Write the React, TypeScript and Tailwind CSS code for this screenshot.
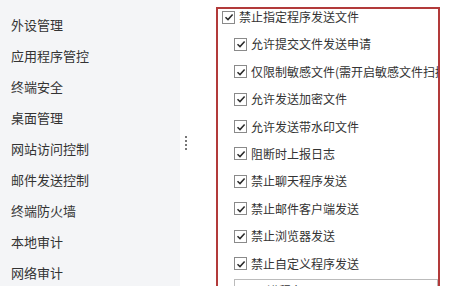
import React from 'react'

const menu = ['外设管理', '应用程序管控', '终端安全', '桌面管理', '网站访问控制', '邮件发送控制', '终端防火墙', '本地审计', '网络审计']

const subs = [
  '允许提交文件发送申请',
  '仅限制敏感文件(需开启敏感文件扫描)',
  '允许发送加密文件',
  '允许发送带水印文件',
  '阻断时上报日志',
  '禁止聊天程序发送',
  '禁止邮件客户端发送',
  '禁止浏览器发送',
  '禁止自定义程序发送',
]

const Check = () => (
  <span className="w-[13px] h-[13px] shrink-0 border border-[#8a8a8a] bg-white flex items-center justify-center">
    <svg width="10" height="10" viewBox="0 0 10 10">
      <path d="M1.5 5.2 L4 7.6 L8.6 2.4" fill="none" stroke="#2b2b2b" strokeWidth="1.5" />
    </svg>
  </span>
)

const Row = ({ label, indent }: { label: string; indent?: boolean }) => (
  <div className={`flex items-center gap-[4px] h-[16px] whitespace-nowrap ${indent ? 'pl-[12px]' : ''}`}>
    <Check />
    <span className="text-[12px] text-[#333]">{label}</span>
  </div>
)

export default function App() {
  return (
    <div
      className="w-[459px] h-[286px] overflow-hidden bg-white flex"
      style={{ fontFamily: '"Noto Sans CJK SC", "Noto Sans", sans-serif' }}
    >
      <aside className="w-[180px] shrink-0 bg-[#f4f5f7] pt-[9px] pl-[11px]">
        {menu.map((m) => (
          <div key={m} className="h-[31px] flex items-center text-[13px] text-[#333]">{m}</div>
        ))}
      </aside>
      <div className="w-[36px] shrink-0 flex items-center pl-[5px]">
        <div className="flex flex-col gap-[2px]">
          <span className="w-[2px] h-[2px] bg-[#777]" />
          <span className="w-[2px] h-[2px] bg-[#777]" />
          <span className="w-[2px] h-[2px] bg-[#777]" />
          <span className="w-[2px] h-[2px] bg-[#777]" />
        </div>
      </div>
      <section className="w-[224px] shrink-0 mt-[7px] h-[300px] border-2 border-[#b23a3a] overflow-hidden pl-[4px]">
        <div className="flex flex-col gap-[11.4px]">
          <Row label="禁止指定程序发送文件" />
          {subs.map((s) => (
            <Row key={s} label={s} indent />
          ))}
          <div className="-mt-[4px] ml-[12px] h-[24px] border border-[#bbb] flex items-center pl-[32px] text-[12px] text-[#333] whitespace-nowrap">
            进程名
          </div>
        </div>
      </section>
    </div>
  )
}
